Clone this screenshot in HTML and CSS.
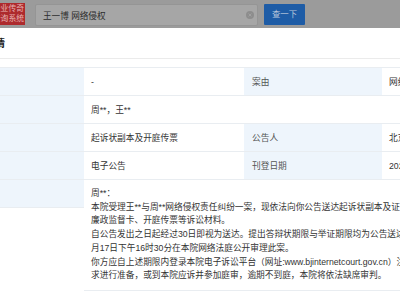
FILE: index.html
```html
<!DOCTYPE html>
<html lang="zh-CN">
<head>
    <meta charset="UTF-8">
    <title>公告详情</title>
    <link rel="stylesheet" href="styles.css">
</head>
<body>
    <div class="topbar">
        <div class="logo">
            <div class="logo-text">企业传奇<br>查询系统</div>
        </div>
        <div class="search">
            <span class="search-text">王一博 网络侵权</span>
            <svg class="clear" width="8" height="8" viewBox="0 0 8 8">
                <circle cx="4" cy="4" r="4" fill="#8d8d8d"/>
                <path d="M2.6 2.6 L5.4 5.4 M5.4 2.6 L2.6 5.4" stroke="#a4a4a4" stroke-width="0.9"/>
            </svg>
        </div>
        <div class="btn">查一下</div>
    </div>

    <div class="title-bar">
        <div class="title">公告详情</div>
    </div>

    <div class="detail">
        <div class="cell label"></div>
        <div class="cell">-</div>
        <div class="cell label">案由</div>
        <div class="cell">网络侵权责任纠纷</div>

        <div class="cell label"></div>
        <div class="cell wide">周**，王**</div>

        <div class="cell label"></div>
        <div class="cell">起诉状副本及开庭传票</div>
        <div class="cell label">公告人</div>
        <div class="cell">北京互联网法院</div>

        <div class="cell label"></div>
        <div class="cell">电子公告</div>
        <div class="cell label">刊登日期</div>
        <div class="cell">2024-04-12</div>

        <div class="cell label"></div>
        <div class="cell wide content">
            <div class="line">周**：</div>
            <div class="line">本院受理王**与周**网络侵权责任纠纷一案，现依法向你公告送达起诉状副本及证据、应诉通知书、举证通知书、</div>
            <div class="line">廉政监督卡、开庭传票等诉讼材料。</div>
            <div class="line">自公告发出之日起经过30日即视为送达。提出答辩状期限与举证期限均为公告送达期满后的15日内。本案定于2024年</div>
            <div class="line">月17日下午16时30分在本院网络法庭公开审理此案。</div>
            <div class="line">你方应自上述期限内登录本院电子诉讼平台（网址:www.bjinternetcourt.gov.cn）注册并按照平台要</div>
            <div class="line">求进行准备，或到本院应诉并参加庭审，逾期不到庭，本院将依法缺席审判。</div>
        </div>
    </div>
</body>
</html>
```

FILE: styles.css
```css
*{
    padding:0;
    margin:0;
    box-sizing:border-box;
}
body{
    width:400px;
    height:300px;
    overflow:hidden;
    background:#fff;
    font-family:"Liberation Sans","Noto Sans CJK SC",sans-serif;
    color:#333;
}
.topbar{
    display:flex;
    align-items:flex-start;
    height:28px;
    padding-top:4px;
    background:#9b9b9b;
}
.logo{
    display:flex;
    justify-content:flex-end;
    width:25px;
    height:22px;
    margin-top:-1px;
    overflow:hidden;
    background:#ad2a2d;
}
.logo-text{
    flex:none;
    padding:1px 1px 0 0;
    font-size:7.8px;
    line-height:10px;
    color:#e7b3b3;
    white-space:nowrap;
}
.search{
    display:flex;
    align-items:center;
    justify-content:space-between;
    width:223px;
    height:22px;
    margin-left:10px;
    padding:0 3px 0 7px;
    background:#a6a6a6;
    border:1px solid #959595;
    border-radius:2px;
}
.search-text{
    font-size:8.6px;
    color:#2b2b2b;
}
.clear{
    display:block;
}
.btn{
    width:41px;
    height:21px;
    margin-left:6px;
    line-height:21px;
    text-align:center;
    font-size:8.4px;
    color:#b9c7db;
    background:#1e5ca6;
    border-radius:1px;
}
.title-bar{
    display:flex;
    height:31px;
    border-bottom:1px solid #ebebeb;
}
.title{
    flex:none;
    margin-left:-35px;
    line-height:31px;
    font-size:10px;
    font-weight:bold;
    color:#222;
    white-space:nowrap;
}
.detail{
    display:grid;
    grid-template-columns:84px 160px 138px 160px;
    width:542px;
    margin-top:8px;
    border-top:1px solid #e9edf1;
    font-size:8.7px;
}
.cell{
    display:flex;
    align-items:center;
    height:28px;
    padding:0 7px;
    border-bottom:1px solid #e9edf1;
    white-space:nowrap;
    overflow:hidden;
}
.label{
    padding-left:8px;
    background:#eef5fc;
    color:#555;
}
.wide{
    grid-column:span 3;
}
.content{
    display:block;
    height:111px;
    padding-top:7px;
    line-height:13.7px;
}
.line{
    white-space:nowrap;
}
```
